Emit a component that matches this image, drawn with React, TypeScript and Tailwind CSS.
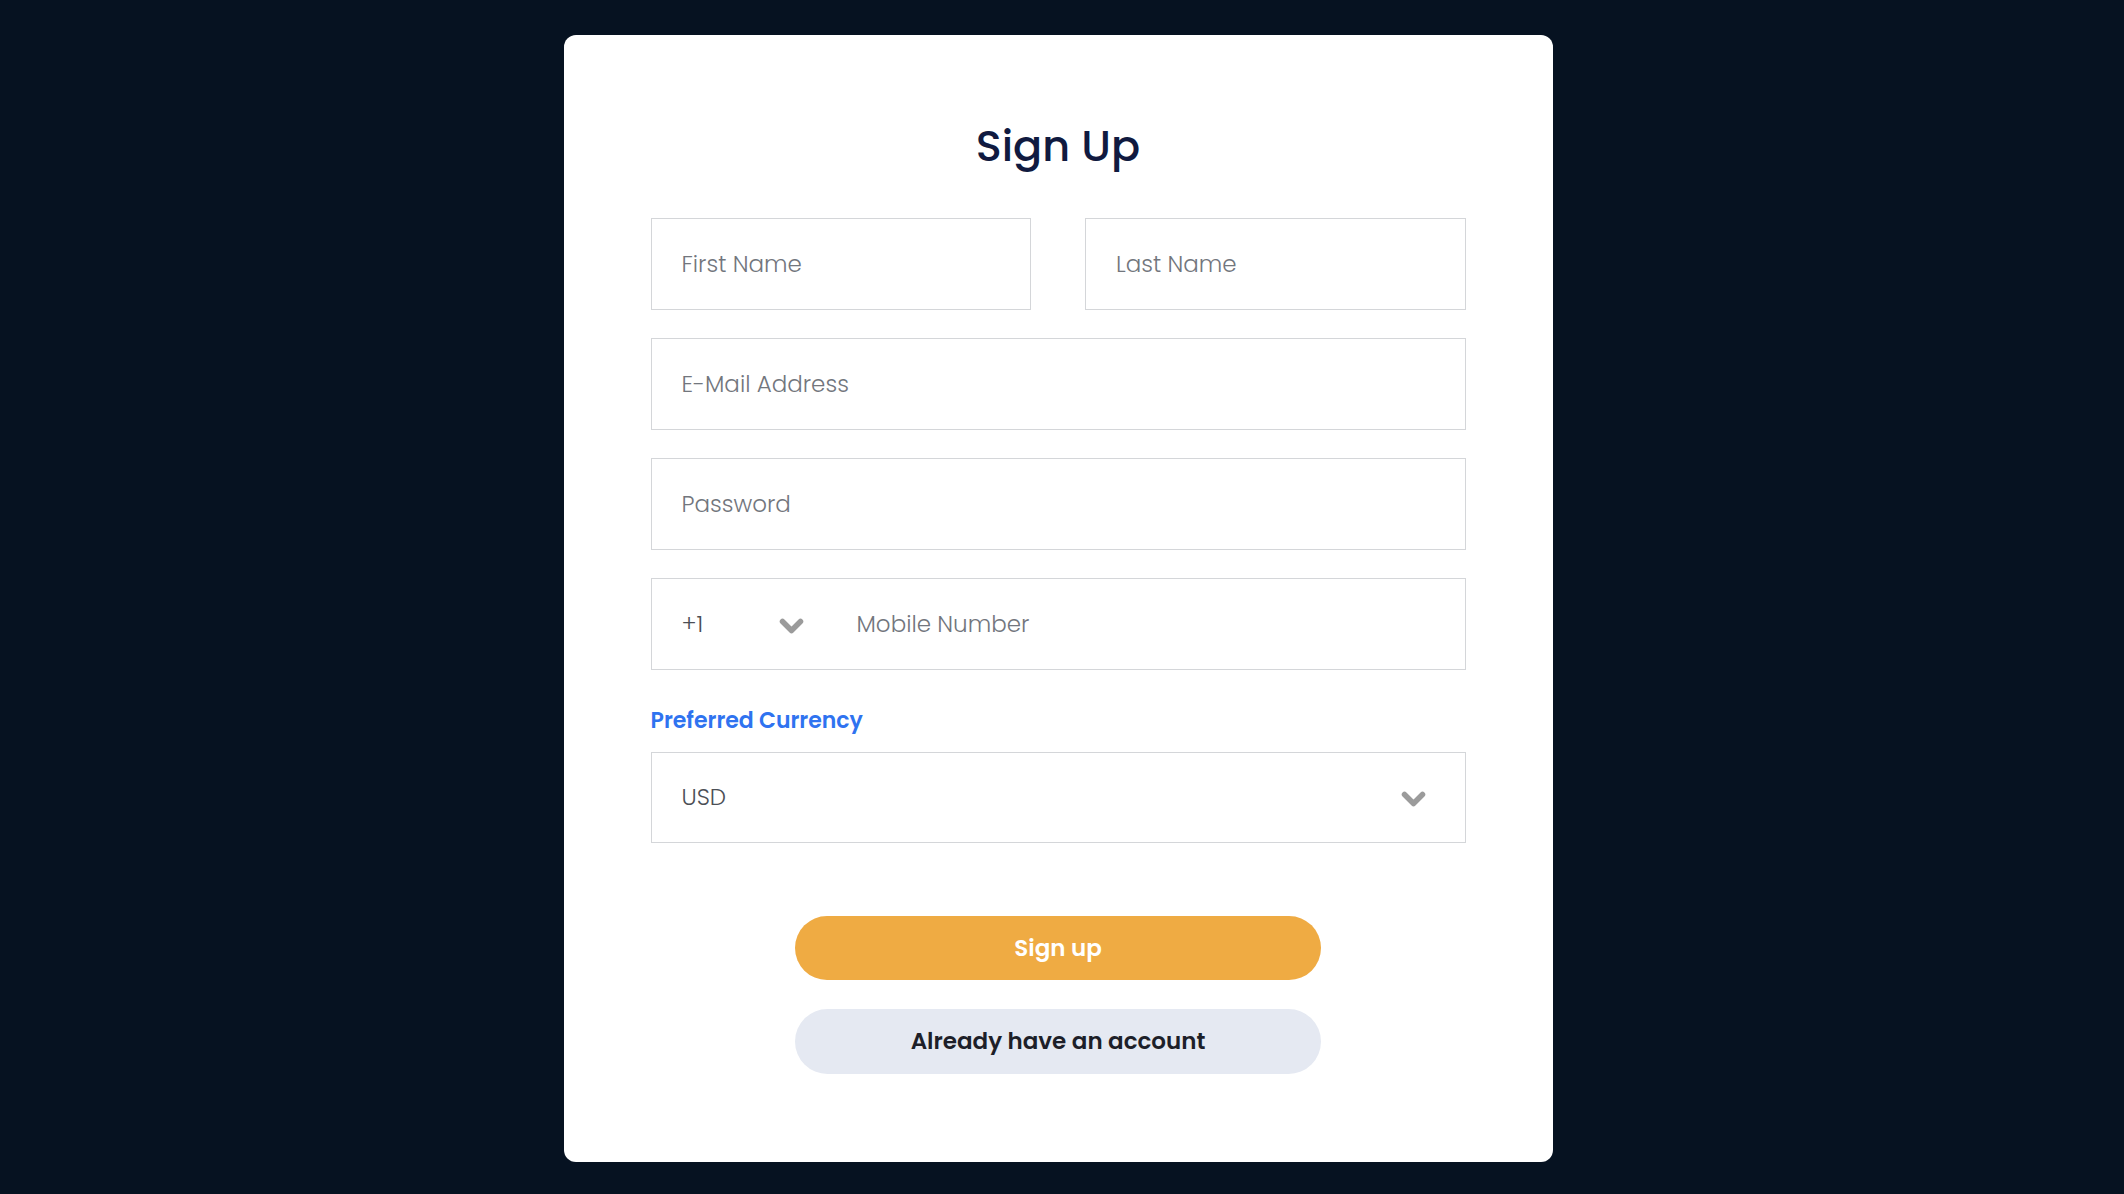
import React from "react";

const font = { fontFamily: "Poppins, Inter, 'Noto Sans', sans-serif" };

const fieldBox =
  "h-[92px] w-full border border-[#d4d6d9] bg-white px-[30px] text-[23px] font-light text-[#4b4f56] placeholder:text-[#72767d] outline-none";

// thick rounded chevron, like the one in the reference
const Chevron = () => (
  <svg width="25" height="16" viewBox="0 0 25 16" className="shrink-0">
    <polyline
      points="3.5,3.5 12.5,12.5 21.5,3.5"
      fill="none"
      stroke="#9b9b9b"
      strokeWidth="5.5"
      strokeLinecap="round"
      strokeLinejoin="round"
    />
  </svg>
);

const SignUpPage = () => {
  return (
    <div
      className="min-h-screen w-full bg-[#061221] flex justify-center pt-[35px] pb-[32px] pr-[8px]"
      style={font}
    >
      <div className="w-[989px] h-[1127px] bg-white rounded-[12px] px-[87px] pt-[86px]">
        <h1 className="text-center text-[43px] leading-[50px] font-medium text-[#101a40]">
          Sign Up
        </h1>

        <form className="mt-[47px] flex flex-col gap-[28px]">
          <div className="grid grid-cols-2 gap-[54px]">
            <input className={fieldBox} placeholder="First Name" />
            <input className={fieldBox} placeholder="Last Name" />
          </div>
          <input className={fieldBox} placeholder="E-Mail Address" />
          <input className={fieldBox} type="password" placeholder="Password" />

          {/* phone with country code */}
          <div className="h-[92px] w-full border border-[#d4d6d9] flex items-center">
            <div className="w-[205px] pl-[30px] pr-[53px] flex items-center justify-between">
              <span className="text-[23px] font-light text-[#4b4f56]">+1</span>
              <div className="mt-[4px]">
                <Chevron />
              </div>
            </div>
            <input
              className="flex-1 h-full pr-[30px] text-[23px] font-light text-[#4b4f56] placeholder:text-[#72767d] outline-none"
              placeholder="Mobile Number"
            />
          </div>
        </form>

        <div className="mt-[37px]">
          <label className="block text-[22px] leading-[28px] font-semibold text-[#2f73f0]">
            Preferred Currency
          </label>
          <div className="mt-[17px] h-[91px] w-full border border-[#d4d6d9] flex items-center justify-between pl-[30px] pr-[39px]">
            <span className="text-[23px] font-light text-[#4b4f56]">USD</span>
            <div className="mt-[3px]">
              <Chevron />
            </div>
          </div>
        </div>

        <div className="mt-[73px] flex flex-col items-center gap-[29px]">
          <button className="w-[526px] h-[64px] rounded-full bg-[#efab43] text-white text-[23px] font-semibold">
            Sign up
          </button>
          <button className="w-[526px] h-[65px] rounded-full bg-[#e5e9f2] text-[#1d1f29] text-[23px] font-semibold">
            Already have an account
          </button>
        </div>
      </div>
    </div>
  );
};

export default function App() {
  return <SignUpPage />;
}
